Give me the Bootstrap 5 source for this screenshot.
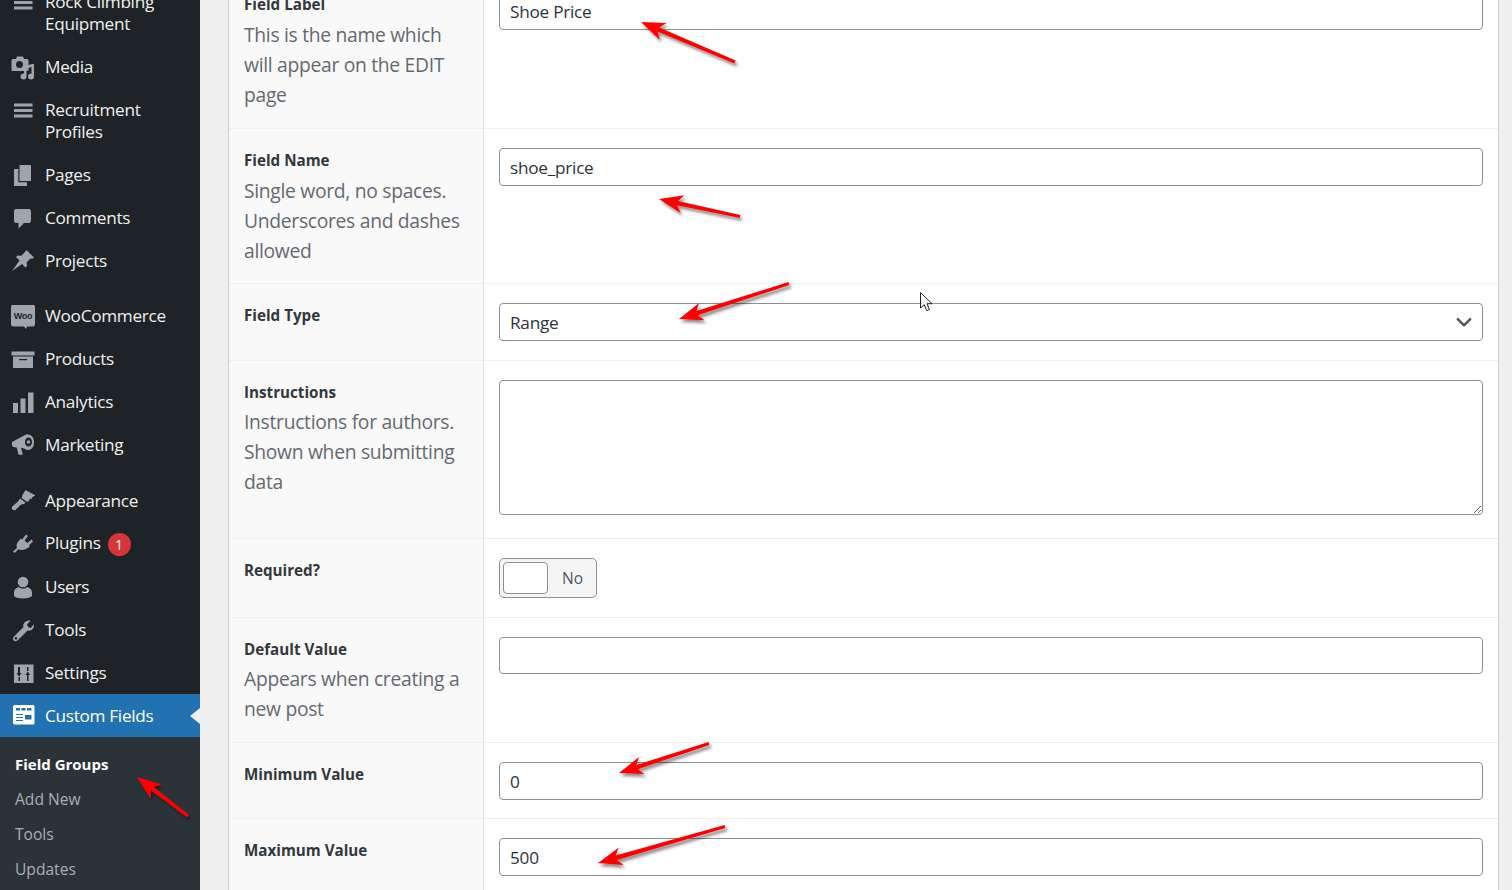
<!DOCTYPE html>
<html lang="en">
<head>
<meta charset="UTF-8">
<title>Edit Field Group</title>
<link href="https://cdn.jsdelivr.net/npm/bootstrap@5.3.0/dist/css/bootstrap.min.css" rel="stylesheet">
<script src="https://cdn.jsdelivr.net/npm/bootstrap@5.3.0/dist/js/bootstrap.bundle.min.js"></script>
<style>
html, body { height: 890px; overflow: hidden; }
body { background: #f0f0f1; font-family: "Open Sans", "Liberation Sans", sans-serif; }
.wp-shell { height: 890px; overflow: hidden; }
.wp-side { width: 200px; flex: 0 0 200px; background: #1d2327; height: 890px; overflow: hidden; }
.wp-menu { margin: -19.3px 0 0; padding: 0; list-style: none; }
.wp-item { display: flex; align-items: flex-start; padding: 10.2px 8px 10.2px 10.5px; color: #f0f0f1; font-size: 17.2px; line-height: 22.4px; letter-spacing: -.3px; }
.wp-item svg { flex: 0 0 24px; width: 24px; height: 24px; margin: -.3px 10.5px -2px 0; fill: #a0a5aa; }
.wp-gap { height: 13px; }
.wp-active { background: #2271b1; color: #fff; position: relative; }
.wp-active svg { fill: #fff; }
.wp-active::after { content: ""; position: absolute; right: 0; top: 13.5px; border: 8px solid transparent; border-right-color: #f0f0f1; border-left-width: 0; border-right-width: 10px; }
.plug-count { width: 23px; height: 23px; margin: .6px 0 0 7px; background: #d63638; color: #fff; font-size: 14px; line-height: 23px; letter-spacing: 0; }
.wp-sub { margin: 0; padding: 10px 0 0 15px; list-style: none; background: #2c3338; height: 200px; }
.wp-sub li { height: 35px; line-height: 34px; font-size: 15.6px; color: #a7aeb4; }
.wp-sub li.cur { color: #fff; font-weight: 700; font-size: 15px; }
.wp-main { flex: 1; padding: 0 13px 0 28px; }
.fld-box { margin-top: -28px; background: #fff; border-left: 1px solid #ccd0d4; border-right: 1px solid #ccd0d4; }
.fld-row { display: flex; border-top: 1px solid #eeeff0; }
.fld-label { width: 255px; flex: 0 0 255px; background: #f9f9f9; border-right: 1px solid #e1e1e1; padding: 19px 15px 18px; }
.fld-label h6 { margin: 0 0 3px; font-size: 15.2px; line-height: 24px; font-weight: 700; color: #32373c; }
.fld-label p { margin: 0; font-size: 19.3px; line-height: 30px; color: #646970; letter-spacing: -.3px; }
.fld-label.fld-drop h6 { margin-bottom: 4px; }
.fld-label.fld-trim { padding-bottom: 17px; }
.fld-value { flex: 1; padding: 19px 15px; }
.fld-tight { padding-bottom: 18px; }
.fld-input, .fld-input:focus { display: block; height: 38px; min-height: 0; border: 1px solid #8c8f94; border-radius: 4px; padding: 0 10px; font-size: 17.2px; line-height: 36px; color: #2c3338; box-shadow: none; letter-spacing: -.25px; }
.fld-short, .fld-short:focus { height: 37px; }
.fld-area, .fld-area:focus { height: 135px; margin-bottom: 4px; padding: 6px 10px; resize: vertical; }
.fld-pick, .fld-pick:focus { padding-top: 1px; background-image: url("data:image/svg+xml,%3csvg xmlns='http://www.w3.org/2000/svg' viewBox='0 0 16 16'%3e%3cpath fill='none' stroke='%2350575e' stroke-linecap='round' stroke-linejoin='round' stroke-width='2.200' d='M2.500 5.500 8 11l5.500-5.500'/%3e%3c/svg%3e"); background-size: 18px 18px; background-position: right 9px center; }
.fld-switch { width: 98px; height: 40px; background: #f5f5f5; border: 1px solid #8c8f94; border-radius: 5px; padding: 3px; }
.fld-knob { width: 45px; height: 32px; background: #fff; border: 1px solid #8c8f94; border-radius: 4px; }
.fld-switch span { margin: 2px 0 0 14px; font-size: 15.5px; color: #50575e; }
.shot-marks { position: absolute; left: 0; top: 0; width: 1512px; height: 890px; pointer-events: none; }
</style>
</head>
<body>
<div class="wp-shell d-flex">
  <div class="wp-side">
    <ul class="wp-menu">
      <li class="wp-item"><svg viewBox="0 0 24 24"><path d="M3 4.500h18.500v3H3zM3 10h18.500v3H3zM3 15.500h18.500v3H3z"/></svg><span>Rock Climbing Equipment</span></li>
      <li class="wp-item"><svg viewBox="0 0 24 24"><path fill-rule="evenodd" d="M2 3h3l1-2.500h6L13 3h3a1.500 1.500 0 0 1 1.500 1.500v9A1.500 1.500 0 0 1 16 15H2a1.500 1.500 0 0 1-1.500-1.500v-9A1.500 1.500 0 0 1 2 3zM8.500 5a3.500 3.500 0 1 0 0 7 3.500 3.500 0 0 0 0-7z"/><path d="M13 10.500l8-2.500h2v12.500a3 3 0 1 1-2.500-3V11l-5 1.500v8a3 3 0 1 1-2.500-3z"/></svg><span>Media</span></li>
      <li class="wp-item"><svg viewBox="0 0 24 24"><path d="M3 4.500h18.500v3H3zM3 10h18.500v3H3zM3 15.500h18.500v3H3z"/></svg><span>Recruitment Profiles</span></li>
      <li class="wp-item"><svg viewBox="0 0 24 24"><path d="M8.500 1H20v16H8.500z"/><path d="M3 5h4.300v13.200H16V22H3z"/></svg><span>Pages</span></li>
      <li class="wp-item"><svg viewBox="0 0 24 24"><path d="M5 2h13a2 2 0 0 1 2 2v10a2 2 0 0 1-2 2h-5l-5.500 5.500V16H5a2 2 0 0 1-2-2V4a2 2 0 0 1 2-2z"/></svg><span>Comments</span></li>
      <li class="wp-item"><svg viewBox="0 0 24 24"><path d="M16 1.500L23 8.500l-1.500 1.200-2-.3-3.800 3.800.3 3.800-1.500 1.500-3.500-3.500L1 22l7.500-10.500L5 8l1.500-1.500 3.800.3L14 3l.5-1.500z"/></svg><span>Projects</span></li>
      <li class="wp-gap"></li>
      <li class="wp-item"><svg viewBox="0 0 24 24"><path d="M2.500 -.5h19a2.500 2.500 0 0 1 2.500 2.500v17a2.500 2.500 0 0 1-2.500 2.500H16l-1 2.500-2-2.500H2.500A2.500 2.500 0 0 1 0 19V2A2.500 2.500 0 0 1 2.500-.5z"/><text x="12" y="14" text-anchor="middle" font-family="Liberation Sans, sans-serif" font-size="9" font-weight="700" style="fill:#1d2327">Woo</text></svg><span>WooCommerce</span></li>
      <li class="wp-item"><svg viewBox="0 0 24 24"><path fill-rule="evenodd" d="M.5 3.500h23v4H.5zM2 8.500h20V20H2zM8 11v1.200h8V11z"/></svg><span>Products</span></li>
      <li class="wp-item"><svg viewBox="0 0 24 24"><path d="M2 12h5v10H2zM9.500 7.500h5V22h-5zM17 1.500h5.500V22H17z"/></svg><span>Analytics</span></li>
      <li class="wp-item"><svg viewBox="0 0 24 24"><path fill-rule="evenodd" d="M1 9l13-7c1-.6 1.600-.8 3-.5 4 .5 6 3.500 6 8 0 4.500-2.500 7.500-6 7.500-1.500 0-2.500-.8-3.500-1.300l-3.500-1 1.800 6.800-4 .5-2.200-7.500-3.500-.5C1 13 .5 11 1 9zM17.500 4.500c-2 0-3.500 2-3.500 4.500s1.500 4.500 3.500 4.500S21 11.500 21 9s-1.500-4.500-3.500-4.500z"/><circle cx="17.500" cy="9" r="1.800"/></svg><span>Marketing</span></li>
      <li class="wp-gap"></li>
      <li class="wp-item"><svg viewBox="0 0 24 24"><path d="M14.500 1l10 5.500-3 1.500-1 2-1.500-.5-1 2-1.500 1.500-6-4 1-3z"/><path d="M9 9.500l5.500 4-1.500 1.500-3 .5-5.500 5.500C3 21.500 1.500 21 1 20s-.3-2 .5-2.800L7 12.500z"/></svg><span>Appearance</span></li>
      <li class="wp-item"><svg viewBox="0 0 24 24"><path d="M15 2.500l2 1.500-3.500 4.500 3 2.500 4-3.500 1.500 2-4 3.800 1 1-2 1.500-1.500 1-3 1c-2 .5-4 .2-5-.5L3.500 21 2 19.500 6 16c-.8-2-.5-3.500.5-5.500l2-2.500 1.500-1.500 1.200 1z"/></svg><span>Plugins</span><span class="plug-count rounded-circle d-inline-flex justify-content-center">1</span></li>
      <li class="wp-item"><svg viewBox="0 0 24 24"><circle cx="12" cy="6" r="5.300"/><path d="M3 20v-3.500c0-3 2.500-5 5-5.500 1 1 2.500 1.500 4 1.500s3-.5 4-1.500c2.500.5 5 2.500 5 5.500V20c-2 1.800-5 2.500-9 2.500S5 21.800 3 20z"/></svg><span>Users</span></li>
      <li class="wp-item"><svg viewBox="0 0 24 24"><path fill-rule="evenodd" d="M23 6c0 3.500-3 6.500-6.500 5.500L7 21c-1.500 1.500-3.500 1.500-4.300.5C1.500 20 2 18.500 3 17.500L12.500 8C11.500 4.500 14.500 1.500 18 1.500c.6 0 1.200.1 1.500.3L16 5.200l1 2.700 2.700 1 3.200-3.600c.1.200.1.500.1.700zM5 18a1.300 1.300 0 1 0 0 2.600A1.300 1.300 0 0 0 5 18z"/></svg><span>Tools</span></li>
      <li class="wp-item"><svg viewBox="0 0 24 24"><path fill-rule="evenodd" d="M3 2.500h19.500V21H3zM7 5v6H5.500L8 14.500l2.500-3.500H9V5zM7.500 15v4h1.500v-4zM16 5v4h1.500V5zM16.800 9.500L14.500 13H16v6h1.500v-6H19z"/></svg><span>Settings</span></li>
      <li class="wp-item wp-active"><svg viewBox="0 0 24 24"><path fill-rule="evenodd" d="M3.500 1h18.500a1.500 1.500 0 0 1 1.500 1.500V19a1.500 1.500 0 0 1-1.500 1.500H3.500A1.500 1.500 0 0 1 2 19V2.500A1.500 1.500 0 0 1 3.500 1zM5 4v2.500h4V4zM10.500 4v2.500h4V4zM16 4v2.500h4.500V4zM5 10v1h7V10zM5 13v1h7V13zM5 16v1h7V16zM14 11v4.500h6.500V11z"/></svg><span>Custom Fields</span></li>
    </ul>
    <ul class="wp-sub">
      <li class="cur">Field Groups</li>
      <li>Add New</li>
      <li>Tools</li>
      <li>Updates</li>
    </ul>
  </div>
  <div class="wp-main">
    <div class="fld-box">
      <div class="fld-row">
        <div class="fld-label fld-drop"><h6>Field Label</h6><p>This is the name which will appear on the EDIT page</p></div>
        <div class="fld-value"><input class="form-control fld-input" type="text" value="Shoe Price"></div>
      </div>
      <div class="fld-row">
        <div class="fld-label fld-drop fld-trim"><h6>Field Name</h6><p>Single word, no spaces. Underscores and dashes allowed</p></div>
        <div class="fld-value"><input class="form-control fld-input" type="text" value="shoe_price"></div>
      </div>
      <div class="fld-row">
        <div class="fld-label"><h6>Field Type</h6></div>
        <div class="fld-value"><select class="form-select fld-input fld-pick"><option>Range</option></select></div>
      </div>
      <div class="fld-row">
        <div class="fld-label"><h6>Instructions</h6><p>Instructions for authors. Shown when submitting data</p></div>
        <div class="fld-value"><textarea class="form-control fld-input fld-area"></textarea></div>
      </div>
      <div class="fld-row">
        <div class="fld-label"><h6>Required?</h6></div>
        <div class="fld-value"><div class="fld-switch d-flex align-items-center"><div class="fld-knob"></div><span>No</span></div></div>
      </div>
      <div class="fld-row">
        <div class="fld-label"><h6>Default Value</h6><p>Appears when creating a new post</p></div>
        <div class="fld-value"><input class="form-control fld-input fld-short" type="text"></div>
      </div>
      <div class="fld-row">
        <div class="fld-label"><h6>Minimum Value</h6></div>
        <div class="fld-value fld-tight"><input class="form-control fld-input" type="text" value="0"></div>
      </div>
      <div class="fld-row">
        <div class="fld-label"><h6>Maximum Value</h6></div>
        <div class="fld-value"><input class="form-control fld-input" type="text" value="500"></div>
      </div>
    </div>
  </div>
</div>

<svg class="shot-marks" id="marks" viewBox="0 0 1512 890">
  <defs><filter id="soft" x="-20%" y="-40%" width="150%" height="190%"><feDropShadow dx="2" dy="3" stdDeviation="1.600" flood-color="#000" flood-opacity=".45"/></filter></defs>
  <path d="M920.500 292.500v15.500l3.700-3.300 2.500 6 2.800-1.200-2.500-5.800h5z" fill="#fff" stroke="#1d2327" stroke-width="1"/>
</svg>

<script>
  // red annotation arrows: tail x,y then tip x,y
  const arrows = [
    [735, 62, 641, 22], [740, 216.500, 659, 199], [789, 283.500, 679, 319],
    [709, 743.500, 619, 773], [725, 826.500, 598, 863], [188, 816, 137, 777]
  ];
  const marks = document.getElementById('marks');
  arrows.forEach(a => {
    const dx = a[0] - a[2], dy = a[1] - a[3];
    const len = Math.hypot(dx, dy), ux = dx / len, uy = dy / len, nx = -uy, ny = ux;
    const at = (along, side) => (a[2] + ux * along + nx * side).toFixed(1) + ',' + (a[3] + uy * along + ny * side).toFixed(1);
    const poly = document.createElementNS('http://www.w3.org/2000/svg', 'polygon');
    poly.setAttribute('points', [at(0, 0), at(24, 9), at(19, 2.2), at(len, 1.6), at(len, -1.6), at(19, -2.2), at(24, -9)].join(' '));
    poly.setAttribute('fill', '#fe0000');
    poly.setAttribute('filter', 'url(#soft)');
    marks.appendChild(poly);
  });
</script>
</body>
</html>
